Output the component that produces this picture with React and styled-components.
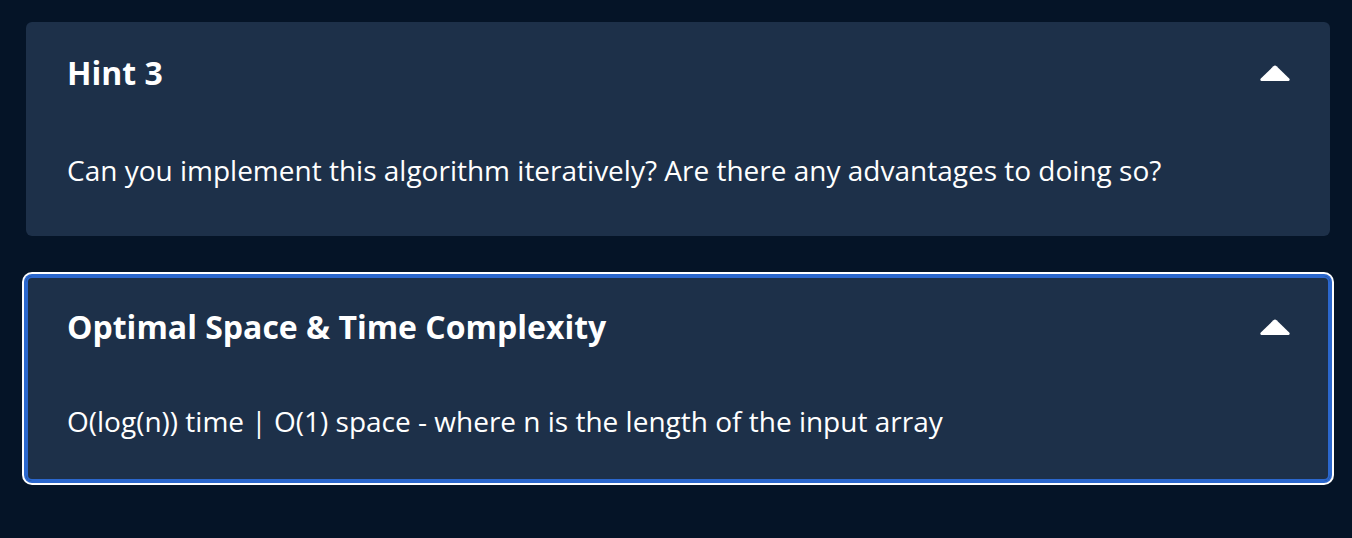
import React from 'react';
import styled, { createGlobalStyle } from 'styled-components';

const GlobalStyle = createGlobalStyle`
  html, body {
    margin: 0;
    background: #051427;
  }
  body {
    font-family: 'Open Sans', 'Noto Sans', sans-serif;
    -webkit-font-smoothing: antialiased;
  }
`;

const hints = [
  {
    id: 'hint-3',
    title: 'Hint 3',
    body: 'Can you implement this algorithm iteratively? Are there any advantages to doing so?',
    focused: false,
  },
  {
    id: 'complexity',
    title: 'Optimal Space & Time Complexity',
    body: 'O(log(n)) time | O(1) space - where n is the length of the input array',
    focused: true,
  },
];

const Page = styled.div`
  min-height: 538px;
  box-sizing: border-box;
  padding: 22px 22px 0 26px;
  display: flex;
  flex-direction: column;
  gap: 40px;
`;

const Card = styled.section`
  background: #1d3049;
  border-radius: 6px;
  padding: ${(p) => (p.$focused ? '27px 40px 40px 41px' : '27px 40px 46px 41px')};
  color: #fff;
  box-shadow: ${(p) =>
    p.$focused
      ? 'inset 0 0 0 2px #2b67cd, 0 0 0 2px #2b67cd, 0 0 0 4px #ffffff'
      : 'none'};
`;

const Header = styled.div`
  display: flex;
  align-items: center;
  justify-content: space-between;
  height: 48px;
`;

const Title = styled.h3`
  margin: 0;
  font-size: 32px;
  font-weight: 700;
  line-height: 48px;
`;

const Body = styled.p`
  margin: ${(p) => (p.$focused ? '50px 0 0' : '53px 0 0')};
  font-size: 28px;
  line-height: 40px;
  font-weight: 400;
`;

const Caret = () => (
  <svg width="30" height="17" viewBox="0 0 30 17" aria-hidden="true">
    <path
      d="M13.4 1.3 Q15 -0.2 16.6 1.3 L29.2 13.6 Q30.4 15.2 28.6 16 L1.4 16 Q-0.4 15.2 0.8 13.6 Z"
      fill="#fff"
    />
  </svg>
);

export default function App() {
  return (
    <>
      <GlobalStyle />
      <Page>
        {hints.map((h) => (
          <Card key={h.id} $focused={h.focused}>
            <Header>
              <Title>{h.title}</Title>
              <Caret />
            </Header>
            <Body $focused={h.focused}>{h.body}</Body>
          </Card>
        ))}
      </Page>
    </>
  );
}
